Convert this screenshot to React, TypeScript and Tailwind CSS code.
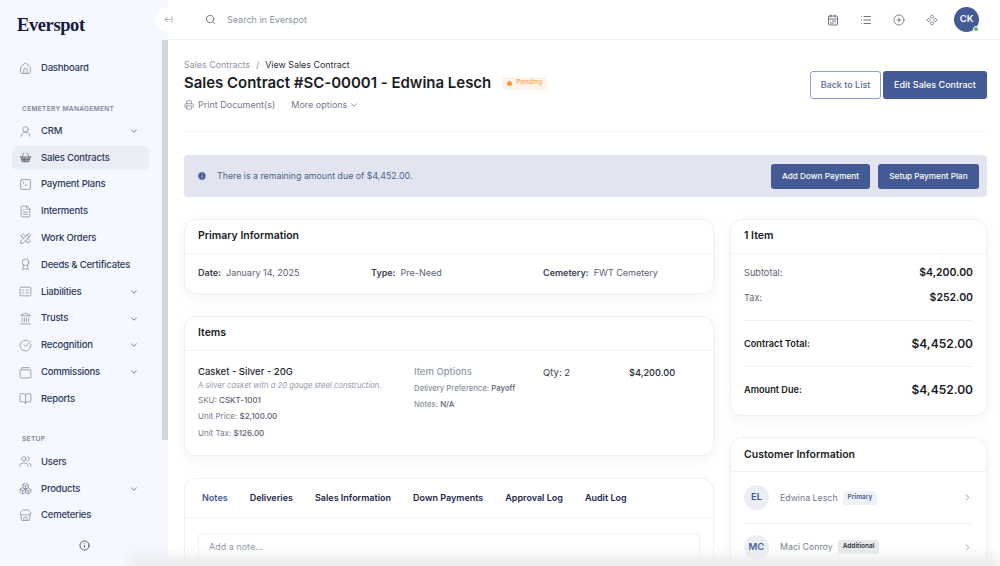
import {
  ArrowLeftFromLine,
  Award,
  BookOpen,
  Boxes,
  CalendarRange,
  ChevronDown,
  ChevronRight,
  CircleCheckBig,
  CirclePlus,
  Component,
  FileText,
  House,
  Info,
  Landmark,
  List,
  Printer,
  Search,
  ShoppingBasket,
  SquareTerminal,
  Store,
  UserRound,
  Users,
} from "lucide-react";
import { TbTools } from "react-icons/tb";

const LedgerIcon = (props: any) => (
  <svg width={13} height={13} viewBox="0 0 24 24" fill="none" stroke="currentColor" strokeWidth={1.4} {...props}>
    <rect x="2" y="4" width="20" height="16" rx="2" />
    <path d="M6 9.5h3M6 14.5h3M12 9.5h6M12 14.5h6" />
  </svg>
);

const PouchIcon = (props: any) => (
  <svg width={13} height={13} viewBox="0 0 24 24" fill="none" stroke="currentColor" strokeWidth={1.4} {...props}>
    <rect x="2" y="7" width="20" height="15" rx="2" />
    <path d="M5 7V4a1 1 0 0 1 1-1h14" />
  </svg>
);

const mainNav = [
  { name: "CRM", icon: UserRound, open: true },
  { name: "Sales Contracts", icon: ShoppingBasket, active: true },
  { name: "Payment Plans", icon: SquareTerminal },
  { name: "Interments", icon: FileText },
  { name: "Work Orders", icon: TbTools },
  { name: "Deeds & Certificates", icon: Award },
  { name: "Liabilities", icon: LedgerIcon, open: true },
  { name: "Trusts", icon: Landmark, open: true },
  { name: "Recognition", icon: CircleCheckBig, open: true },
  { name: "Commissions", icon: PouchIcon, open: true },
  { name: "Reports", icon: BookOpen },
];

const setupNav = [
  { name: "Users", icon: Users },
  { name: "Products", icon: Boxes, open: true },
  { name: "Cemeteries", icon: Store },
];

const tabs = ["Deliveries", "Sales Information", "Down Payments", "Approval Log", "Audit Log"];

const NavItem = ({ item }: { item: any }) => {
  const Icon = item.icon;
  return (
    <div
      className={`flex items-center h-6 pl-[7px] pr-[10px] rounded-md text-[9.5px] font-medium text-[#2d3a5c] whitespace-nowrap ${
        item.active ? "bg-[#e9edf5]" : ""
      }`}
    >
      <Icon
        size={13}
        strokeWidth={1.3}
        fill={item.active ? "#9aa0ae" : "none"}
        className={item.active ? "text-[#5c6478]" : "text-[#7b8294]"}
      />
      <span className="ml-[9px] flex-1 tracking-[-0.2px]">{item.name}</span>
      {item.open && <ChevronDown size={10} className="text-[#5c6478]" />}
    </div>
  );
};

const Card = ({
  title,
  className,
  headClass = "pb-[2px]",
  children,
}: {
  title: string;
  className?: string;
  headClass?: string;
  children: any;
}) => (
  <div className={`bg-white rounded-xl border border-[#f0f1f4] shadow-[0_4px_12px_rgba(30,40,80,0.05)] ${className ?? ""}`}>
    <div className={`h-[33px] flex items-center px-[13px] text-[10.5px] font-semibold text-[#1a1d24] ${headClass}`}>
      {title}
    </div>
    {children}
  </div>
);

const App = () => {
  return (
    <div className="relative flex h-[566px] w-[1000px] overflow-hidden bg-white font-['Inter',sans-serif]">
      <aside className="relative flex flex-col w-[168px] shrink-0 bg-[#f5f8ff]">
        <div className="h-[50px] pl-[17px] pt-[11px] font-['Liberation_Serif',serif] font-bold text-[18.5px] leading-[28px] tracking-[-0.4px] text-[#161b3d]">
          Everspot
        </div>
        <div className="flex-1 overflow-hidden pl-[12px] pr-[19px]">
          <div className="mt-[6px]">
            <NavItem item={{ name: "Dashboard", icon: House }} />
          </div>
          <div className="mt-[24px] mb-[5px] pl-[10px] text-[6.6px] leading-[10px] font-semibold tracking-[0.3px] text-[#7f8698]">
            CEMETERY MANAGEMENT
          </div>
          <div className="flex flex-col gap-[2.8px]">
            {mainNav.map((item) => (
              <NavItem key={item.name} item={item} />
            ))}
          </div>
          <div className="mt-[23px] mb-[6px] pl-[10px] text-[6.6px] leading-[10px] font-semibold tracking-[0.3px] text-[#7f8698]">
            SETUP
          </div>
          <div className="flex flex-col gap-[2.8px]">
            {setupNav.map((item) => (
              <NavItem key={item.name} item={item} />
            ))}
          </div>
        </div>
        <div className="h-[42px] shrink-0 flex items-center justify-center border-t border-[#f0f3fa]">
          <Info size={11} className="text-[#4b5563]" />
        </div>
        <div className="absolute right-0 top-[40px] h-[400px] w-[6.5px] bg-[#d1d6e0]" />
      </aside>

      <main className="flex-1 min-w-0 flex flex-col">
        <header className="h-10 shrink-0 flex items-center border-b border-[#f1f2f5] pl-[37px] pr-[21px]">
          <Search size={11} className="text-[#6b7280]" />
          <span className="ml-[11px] flex-1 text-[9px] text-[#8a92a3]">Search in Everspot</span>
          <div className="flex items-center gap-[21px] text-[#4b5563]">
            <CalendarRange size={12} strokeWidth={1.6} />
            <List size={12} strokeWidth={1.6} />
            <CirclePlus size={12} strokeWidth={1.4} />
            <Component size={12} strokeWidth={1.5} />
          </div>
          <div className="relative ml-[16px] h-[25px] w-[25px] rounded-full bg-[#445a94] flex items-center justify-center text-[9.5px] font-semibold text-white">
            CK
            <span className="absolute right-0 bottom-0 h-[6px] w-[6px] rounded-full bg-[#5cb85c] border border-white" />
          </div>
        </header>

        <div className="flex-1 overflow-hidden pl-4 pr-[13px]">
          <div className="flex justify-between h-[92px] border-b border-[#f4f5f7]">
            <div className="pt-[18px]">
              <div className="text-[8.9px] leading-[13px] text-[#8f96a5]">
                Sales Contracts
                <span className="mx-[6px]">/</span>
                <span className="text-[#2a2e38]">View Sales Contract</span>
              </div>
              <div className="flex items-center mt-[1px] h-[22px]">
                <h1 className="text-[15px] font-semibold tracking-[-0.02px] text-[#1a1d24]">
                  Sales Contract #SC-00001 - Edwina Lesch
                </h1>
                <span className="ml-[11px] flex items-center gap-[4px] h-[13px] px-[5px] rounded-[3px] bg-[#fdf5ec] text-[6.6px] font-medium text-[#f5a04c]">
                  <span className="h-[5px] w-[5px] rounded-full bg-[#f59a3e]" />
                  Pending
                </span>
              </div>
              <div className="flex items-center mt-[4px] text-[9px] text-[#737b8c]">
                <Printer size={10} className="text-[#8a92a3]" />
                <span className="ml-[4px]">Print Document(s)</span>
                <span className="ml-[16px]">More options</span>
                <ChevronDown size={10} className="ml-[2px]" />
              </div>
            </div>
            <div className="flex items-start gap-[2px] pt-[31px]">
              <button className="h-[28px] w-[71px] rounded-[3px] border border-[#8f9fc8] text-[9px] font-medium text-[#5a6c9e]">
                Back to List
              </button>
              <button className="h-[28px] w-[104px] rounded-[3px] bg-[#445a94] text-[9px] font-medium text-white">
                Edit Sales Contract
              </button>
            </div>
          </div>

          <div className="mt-[23px] h-[42px] flex items-center justify-between rounded-[4px] bg-[#e2e5f0] pl-[13px] pr-[8px]">
            <div className="flex items-center gap-[10px] text-[8.8px] text-[#4f5f8f]">
              <Info size={10} fill="#445a94" stroke="#e2e5f0" />
              There is a remaining amount due of $4,452.00.
            </div>
            <div className="flex gap-[8px]">
              <button className="h-[25px] w-[99px] rounded-[3px] bg-[#445a94] text-[8.2px] font-medium text-white">
                Add Down Payment
              </button>
              <button className="h-[25px] w-[101px] rounded-[3px] bg-[#445a94] text-[8.2px] font-medium text-white">
                Setup Payment Plan
              </button>
            </div>
          </div>

          <div className="mt-[22px] flex gap-[16px]">
            <div className="w-[530px] shrink-0 flex flex-col gap-[22px]">
              <Card title="Primary Information" className="h-[75px]">
                <div className="border-t border-[#f0f1f4] h-[39px] flex items-center pl-[13px] text-[9px] text-[#5b6373]">
                  <span className="w-[173px]">
                    <b className="font-semibold text-[#3c4250]">Date:</b> &nbsp;January 14, 2025
                  </span>
                  <span className="w-[172px]">
                    <b className="font-semibold text-[#3c4250]">Type:</b> &nbsp;Pre-Need
                  </span>
                  <span>
                    <b className="font-semibold text-[#3c4250]">Cemetery:</b> &nbsp;FWT Cemetery
                  </span>
                </div>
              </Card>

              <Card title="Items" className="h-[140px]">
                <div className="border-t border-[#f0f1f4] flex pl-[13px] pt-[14px]">
                  <div className="w-[216px]">
                    <div className="text-[9.5px] leading-[14px] font-medium text-[#24272f]">Casket - Silver - 20G</div>
                    <div className="text-[7.7px] leading-[13px] italic text-[#9099a8]">
                      A silver casket with a 20 gauge steel construction.
                    </div>
                    <div className="flex flex-col text-[8px] leading-[16.3px] text-[#767e8e]">
                      <span>
                        SKU: <b className="font-medium text-[#5c6373]">CSKT-1001</b>
                      </span>
                      <span>
                        Unit Price: <b className="font-medium text-[#5c6373]">$2,100.00</b>
                      </span>
                      <span>
                        Unit Tax: <b className="font-medium text-[#5c6373]">$126.00</b>
                      </span>
                    </div>
                  </div>
                  <div className="w-[129px]">
                    <div className="text-[9.5px] leading-[14px] font-medium text-[#9099a8]">Item Options</div>
                    <div className="flex flex-col text-[7.8px] leading-[16.3px] text-[#767e8e] mt-[1px]">
                      <span>
                        Delivery Preference: <b className="font-medium text-[#5c6373]">Payoff</b>
                      </span>
                      <span>
                        Notes: <b className="font-medium text-[#5c6373]">N/A</b>
                      </span>
                    </div>
                  </div>
                  <div className="w-[86px] pt-[1px] text-[9.5px] leading-[14px] text-[#3c4250]">Qty: 2</div>
                  <div className="pt-[1px] text-[9.2px] leading-[14px] font-medium text-[#24272f]">$4,200.00</div>
                </div>
              </Card>

              <div className="bg-white rounded-xl border border-[#f0f1f4] h-[120px]">
                <div className="h-[39px] flex items-center gap-[22px] pl-[17px] border-b border-[#f0f1f4] text-[9px] font-semibold text-[#1d2747]">
                  <span className="text-[#445a94]">Notes</span>
                  {tabs.map((tab) => (
                    <span key={tab}>{tab}</span>
                  ))}
                </div>
                <div className="mx-[13px] mt-[15px] h-[60px] rounded-[4px] border border-[#eef0f3] px-[10px] py-[6px] text-[9px] text-[#8f96a5]">
                  Add a note...
                </div>
              </div>
            </div>

            <div className="w-[257px] shrink-0 flex flex-col gap-[21px]">
              <Card title="1 Item" className="h-[197px]">
                <div className="border-t border-[#f0f1f4] px-[13px] text-[9.2px] text-[#5b6373]">
                  <div className="flex justify-between items-center h-[26px] mt-[6px]">
                    <span>Subtotal:</span>
                    <span className="text-[10.5px] font-semibold text-[#1a1d24]">$4,200.00</span>
                  </div>
                  <div className="flex justify-between items-center h-[24px]">
                    <span>Tax:</span>
                    <span className="text-[10.5px] font-semibold text-[#1a1d24]">$252.00</span>
                  </div>
                  <div className="mt-[10px] border-t border-[#f0f1f4] flex justify-between items-center h-[46px]">
                    <span className="font-semibold text-[#1a1d24]">Contract Total:</span>
                    <span className="text-[12px] font-semibold text-[#1a1d24]">$4,452.00</span>
                  </div>
                  <div className="border-t border-[#f0f1f4] flex justify-between items-center h-[46px]">
                    <span className="font-semibold text-[#1a1d24]">Amount Due:</span>
                    <span className="text-[12px] font-semibold text-[#1a1d24]">$4,452.00</span>
                  </div>
                </div>
              </Card>

              <Card title="Customer Information" className="h-[140px]" headClass="">
                <div className="border-t border-[#f0f1f4] px-[13px]">
                  <div className="flex items-center h-[52px] border-b border-[#f0f1f4] text-[8.8px] text-[#737b8c]">
                    <span className="h-[25px] w-[25px] rounded-full bg-[#eceef5] flex items-center justify-center text-[9.5px] font-semibold text-[#445a94]">
                      EL
                    </span>
                    <span className="ml-[11px]">Edwina Lesch</span>
                    <span className="ml-[5px] h-[14px] px-[5px] flex items-center rounded-[3px] bg-[#eef1f8] text-[6.5px] font-semibold text-[#445a94]">
                      Primary
                    </span>
                    <ChevronRight size={11} className="ml-auto text-[#9099a8]" />
                  </div>
                  <div className="flex items-center h-[46px] text-[8.8px] text-[#737b8c]">
                    <span className="h-[25px] w-[25px] rounded-full bg-[#eceef5] flex items-center justify-center text-[9.5px] font-semibold text-[#445a94]">
                      MC
                    </span>
                    <span className="ml-[11px]">Maci Conroy</span>
                    <span className="ml-[5px] h-[14px] px-[5px] flex items-center rounded-[3px] bg-[#e8e9ec] text-[6.5px] font-semibold text-[#2a2e38]">
                      Additional
                    </span>
                    <ChevronRight size={11} className="ml-auto text-[#9099a8]" />
                  </div>
                </div>
              </Card>
            </div>
          </div>
        </div>
      </main>

      <button className="absolute left-[156px] top-[7px] h-6 w-6 rounded-full bg-white flex items-center justify-center text-[#8a92a3]">
        <ArrowLeftFromLine size={9} />
      </button>
      <div className="absolute -bottom-[8px] left-[130px] right-0 h-[18px] bg-[#ebebee] blur-[6px]" />
    </div>
  );
};

export default App;
